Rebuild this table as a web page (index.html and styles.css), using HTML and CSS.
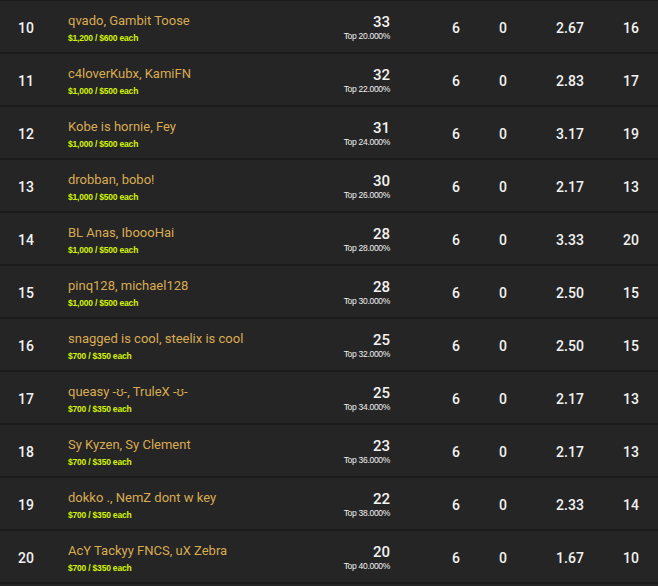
FILE: index.html
```html
<!DOCTYPE html>
<html>
<head>
<meta charset="utf-8">
<link rel="stylesheet" href="styles.css">
</head>
<body>
<div class="board">
  <div class="row"><div class="rank">10</div><div class="team"><div class="names">qvado, Gambit Toose</div><div class="prize">$1,200 / $600 each</div></div><div class="pts"><div class="num">33</div><div class="top">Top 20.000%</div></div><div class="c c6">6</div><div class="c c0">0</div><div class="c kd">2.67</div><div class="c last">16</div></div>
  <div class="row"><div class="rank">11</div><div class="team"><div class="names">c4loverKubx, KamiFN</div><div class="prize">$1,000 / $500 each</div></div><div class="pts"><div class="num">32</div><div class="top">Top 22.000%</div></div><div class="c c6">6</div><div class="c c0">0</div><div class="c kd">2.83</div><div class="c last">17</div></div>
  <div class="row"><div class="rank">12</div><div class="team"><div class="names">Kobe is hornie, Fey</div><div class="prize">$1,000 / $500 each</div></div><div class="pts"><div class="num">31</div><div class="top">Top 24.000%</div></div><div class="c c6">6</div><div class="c c0">0</div><div class="c kd">3.17</div><div class="c last">19</div></div>
  <div class="row"><div class="rank">13</div><div class="team"><div class="names">drobban, bobo!</div><div class="prize">$1,000 / $500 each</div></div><div class="pts"><div class="num">30</div><div class="top">Top 26.000%</div></div><div class="c c6">6</div><div class="c c0">0</div><div class="c kd">2.17</div><div class="c last">13</div></div>
  <div class="row"><div class="rank">14</div><div class="team"><div class="names">BL Anas, IboooHai</div><div class="prize">$1,000 / $500 each</div></div><div class="pts"><div class="num">28</div><div class="top">Top 28.000%</div></div><div class="c c6">6</div><div class="c c0">0</div><div class="c kd">3.33</div><div class="c last">20</div></div>
  <div class="row"><div class="rank">15</div><div class="team"><div class="names">pinq128, michael128</div><div class="prize">$1,000 / $500 each</div></div><div class="pts"><div class="num">28</div><div class="top">Top 30.000%</div></div><div class="c c6">6</div><div class="c c0">0</div><div class="c kd">2.50</div><div class="c last">15</div></div>
  <div class="row"><div class="rank">16</div><div class="team"><div class="names">snagged is cool, steelix is cool</div><div class="prize">$700 / $350 each</div></div><div class="pts"><div class="num">25</div><div class="top">Top 32.000%</div></div><div class="c c6">6</div><div class="c c0">0</div><div class="c kd">2.50</div><div class="c last">15</div></div>
  <div class="row"><div class="rank">17</div><div class="team"><div class="names">queasy -ʊ-, TruleX -ʊ-</div><div class="prize">$700 / $350 each</div></div><div class="pts"><div class="num">25</div><div class="top">Top 34.000%</div></div><div class="c c6">6</div><div class="c c0">0</div><div class="c kd">2.17</div><div class="c last">13</div></div>
  <div class="row"><div class="rank">18</div><div class="team"><div class="names">Sy Kyzen, Sy Clement</div><div class="prize">$700 / $350 each</div></div><div class="pts"><div class="num">23</div><div class="top">Top 36.000%</div></div><div class="c c6">6</div><div class="c c0">0</div><div class="c kd">2.17</div><div class="c last">13</div></div>
  <div class="row"><div class="rank">19</div><div class="team"><div class="names">dokko ., NemZ dont w key</div><div class="prize">$700 / $350 each</div></div><div class="pts"><div class="num">22</div><div class="top">Top 38.000%</div></div><div class="c c6">6</div><div class="c c0">0</div><div class="c kd">2.33</div><div class="c last">14</div></div>
  <div class="row"><div class="rank">20</div><div class="team"><div class="names">AcY Tackyy FNCS, uX Zebra</div><div class="prize">$700 / $350 each</div></div><div class="pts"><div class="num">20</div><div class="top">Top 40.000%</div></div><div class="c c6">6</div><div class="c c0">0</div><div class="c kd">1.67</div><div class="c last">10</div></div>
</div>
</body>
</html>
```
FILE: styles.css
```css
html, body {
  margin: 0;
  padding: 0;
  background: #242424;
}
body {
  font-family: Roboto, "Liberation Sans", sans-serif;
  color: #f2f2f2;
}
.board {
  border-top: 1px solid #1b1b1b;
  width: 658px;
}
.row {
  display: grid;
  grid-template-columns: 52px 248px 90px 92px 42px 92px 30px 1fr;
  align-items: center;
  height: 51px;
  border-bottom: 2px solid #1b1b1b;
  background: #252525;
}
.rank {
  text-align: center;
  font-size: 14px;
  font-weight: 500;
  padding-top: 2px;
}
.team {
  padding-left: 16px;
  padding-top: 4px;
}
.names {
  color: #d9ab52;
  font-size: 13px;
  line-height: 16px;
  white-space: nowrap;
}
.prize {
  color: #d4f500;
  font-family: "Liberation Sans", Arial, sans-serif;
  font-weight: bold;
  font-size: 8.5px;
  line-height: 12px;
  margin-top: 3px;
  letter-spacing: -0.2px;
}
.pts {
  text-align: right;
  padding-top: 2px;
}
.num {
  font-size: 15px;
  font-weight: 500;
  line-height: 16px;
}
.top {
  font-family: "Liberation Sans", Arial, sans-serif;
  font-size: 8.5px;
  line-height: 11px;
  letter-spacing: -0.3px;
  margin-top: 1px;
}
.c {
  text-align: center;
  font-size: 14px;
  font-weight: 500;
  padding-top: 2px;
}
.c6 {
  padding-left: 40px;
}
```
